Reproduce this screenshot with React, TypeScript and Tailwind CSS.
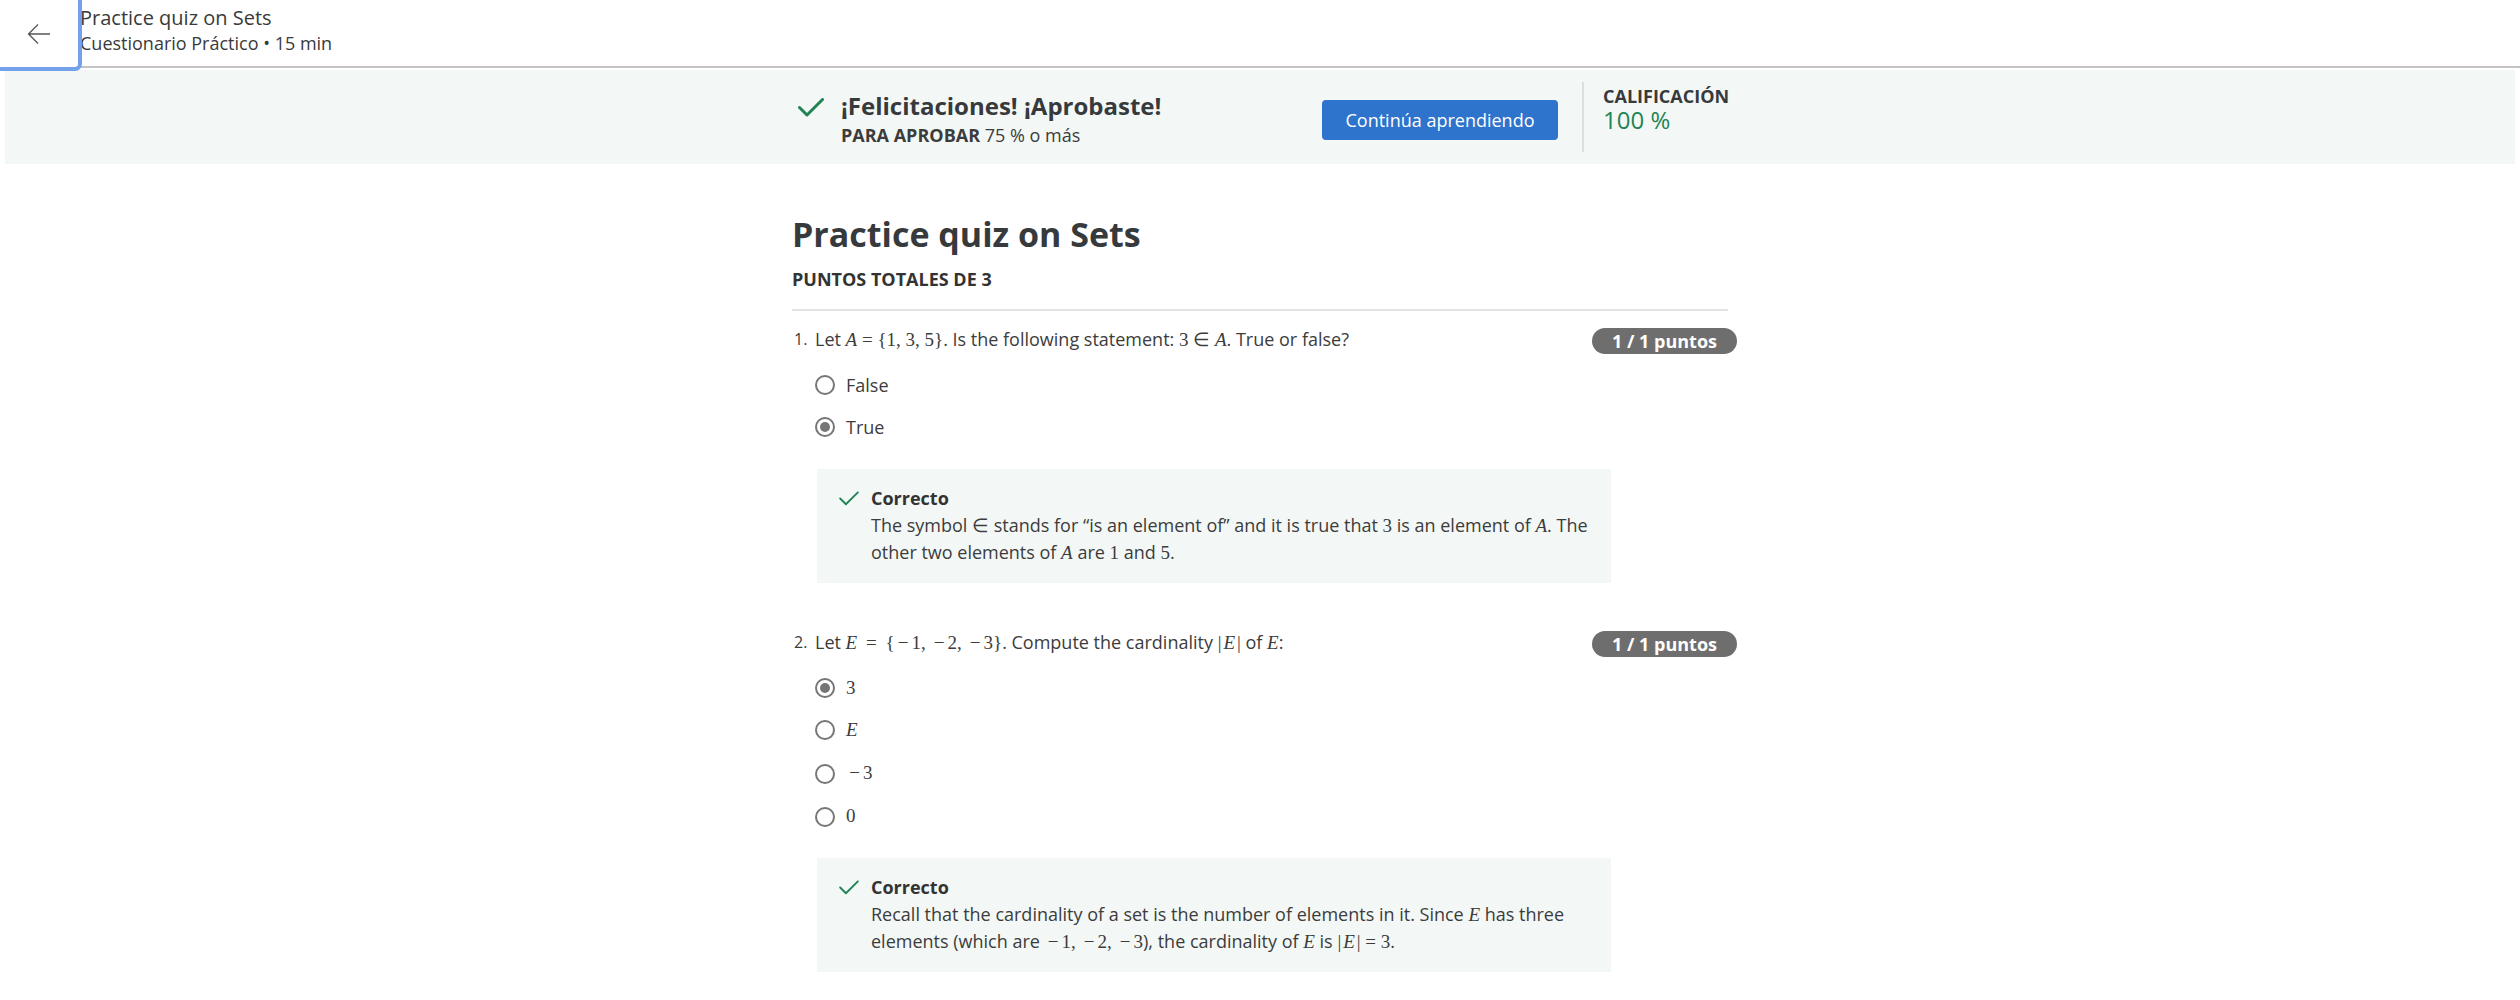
import { ReactNode } from "react";

function Tick({ className }: { className?: string }) {
  return (
    <svg viewBox="0 0 26 19" className={className} fill="none" stroke="currentColor" strokeLinecap="round" strokeLinejoin="round">
      <polyline points="1.5,9.5 9,17 24.5,1.5" />
    </svg>
  );
}

function M({ children, i }: { children: ReactNode; i?: boolean }) {
  return (
    <span className={`font-['Liberation_Serif',serif] text-[19px] ${i ? "italic" : ""}`}>{children}</span>
  );
}

// wider minus, closer to the math font's glyph
function Neg() {
  return <span className="inline-block w-[17px] text-center">−</span>;
}

function Abs({ v }: { v: string }) {
  return (
    <span>
      |<i className="px-[2px]">{v}</i>|
    </span>
  );
}

function Radio({ checked }: { checked?: boolean }) {
  return (
    <span className="w-[20px] h-[20px] shrink-0 rounded-full border-2 border-[#767676] flex items-center justify-center">
      {checked && <span className="w-[10px] h-[10px] rounded-full bg-[#767676]" />}
    </span>
  );
}

function Option({ checked, h = "h-[42px]", children }: { checked?: boolean; h?: string; children: ReactNode }) {
  return (
    <div className={`flex items-center ${h} pl-[23px]`}>
      <Radio checked={checked} />
      <span className="ml-[11px] text-[18px] text-[#3c3c3c]">{children}</span>
    </div>
  );
}

function Badge() {
  return (
    <span className="shrink-0 mt-[1px] mr-[-9px] h-[26px] px-[20px] rounded-full bg-[#6e6e6e] text-white text-[18px] font-bold leading-[26px]">
      1 / 1 puntos
    </span>
  );
}

function Feedback({ children }: { children: ReactNode }) {
  return (
    <div className="ml-[25px] w-[794px] bg-[#f3f8f6] pt-[17px] pb-[17px] pl-[22px] pr-[8px] flex">
      <Tick className="w-[20px] h-[15px] mt-[5px] shrink-0 text-[#1f8354] stroke-[2.4]" />
      <div className="ml-[12px]">
        <div className="text-[18px] font-bold leading-6 text-[#333]">Correcto</div>
        <p className="mt-[2px] text-[18px] leading-[26px] text-[#3c3c3c] whitespace-nowrap">{children}</p>
      </div>
    </div>
  );
}

export default function App() {
  return (
    <div className="min-h-screen bg-white font-['Open_Sans',sans-serif] text-[#333]">
      <header className="flex h-[68px] border-b-2 border-[#c4c4c4]">
        <button className="relative z-10 w-[78px] h-[67px] flex items-center justify-center bg-white rounded-br-[3px] outline-4 outline-[#74a2ea]">
          <svg viewBox="0 0 24 22" className="w-[24px] h-[22px] text-[#555]" fill="none" stroke="currentColor" strokeWidth={1.3}>
            <path d="M23 11H1.5M11 1.5L1.5 11l9.5 9.5" />
          </svg>
        </button>
        <div className="ml-[2px] pt-[6px] flex flex-col">
          <span className="text-[20px] leading-6 text-[#3a3a3a]">Practice quiz on Sets</span>
          <span className="mt-[1px] text-[18px] leading-[24px] text-[#3a3a3a]">Cuestionario Práctico • 15 min</span>
        </div>
      </header>

      <div className="px-[5px] pt-[2px]">
        <div className="h-[94px] bg-[#f3f8f6]">
          <div className="w-[936px] mx-auto h-full flex items-center">
            <div className="flex-1 flex pl-[6px] mt-[2px]">
              <Tick className="w-[26px] h-[19px] mt-[8px] text-[#1f8354] stroke-[3]" />
              <div className="ml-[17px]">
                <div className="text-[24px] font-bold leading-8 text-[#373a3c]">¡Felicitaciones! ¡Aprobaste!</div>
                <div className="mt-[1px] text-[18px] leading-6 text-[#3c3c3c]">
                  <span className="font-bold">PARA APROBAR</span> 75 % o más
                </div>
              </div>
            </div>
            <button className="mt-[6px] w-[236px] h-[40px] rounded-[4px] bg-[#2e73cc] text-white text-[18px]">
              Continúa aprendiendo
            </button>
            <div className="self-stretch my-[12px] ml-[24px] w-[2px] bg-[#dedede]" />
            <div className="self-start mt-[14px] ml-[19px] w-[125px]">
              <div className="text-[18px] font-bold leading-6 text-[#373a3c]">CALIFICACIÓN</div>
              <div className="text-[24px] leading-6 text-[#1f8354]">100 %</div>
            </div>
          </div>
        </div>
      </div>

      <main className="w-[936px] mx-auto pt-[48px] pb-[40px]">
        <h1 className="text-[34px] font-bold leading-[44px] text-[#373a3c]">Practice quiz on Sets</h1>
        <div className="mt-[11px] text-[18px] font-bold leading-6 text-[#333]">PUNTOS TOTALES DE 3</div>
        <div className="mt-[18px] h-[2px] bg-[#e2e2e2]" />

        <section className="mt-[16px]">
          <div className="flex items-start">
            <span className="w-[23px] pl-[2px] text-[16px] leading-6 text-[#3c3c3c]">1.</span>
            <div className="flex-1 text-[18px] leading-6 text-[#3c3c3c]">
              Let <M i>A</M> <M>= {"{"}1, 3, 5{"}"}</M>. Is the following statement: <M>3 ∈</M> <M i>A</M>. True or false?
            </div>
            <Badge />
          </div>
          <div className="mt-[10px]">
            <Option>False</Option>
            <Option checked>True</Option>
          </div>
          <div className="mt-[21px]">
            <Feedback>
              The symbol <M>∈</M> stands for “is an element of” and it is true that <M>3</M> is an element of <M i>A</M>. The
              <br />
              other two elements of <M i>A</M> are <M>1</M> and <M>5</M>.
            </Feedback>
          </div>
        </section>

        <section className="mt-[47px]">
          <div className="flex items-start">
            <span className="w-[23px] pl-[2px] text-[16px] leading-6 text-[#3c3c3c]">2.</span>
            <div className="flex-1 text-[18px] leading-6 text-[#3c3c3c]">
              Let <M i>E</M> <M><span className="mx-[4px]">=</span> {"{"}<Neg />1, <Neg />2, <Neg />3{"}"}</M>. Compute the cardinality <M><Abs v="E" /></M> of <M i>E</M>:
            </div>
            <Badge />
          </div>
          <div className="mt-[10px]">
            <Option checked><M>3</M></Option>
            <Option><M i>E</M></Option>
            <Option h="h-[45px]"><M><Neg />3</M></Option>
            <Option h="h-[41px]"><M>0</M></Option>
          </div>
          <div className="mt-[21px]">
            <Feedback>
              Recall that the cardinality of a set is the number of elements in it. Since <M i>E</M> has three
              <br />
              elements (which are <M><Neg />1, <Neg />2, <Neg />3</M>), the cardinality of <M i>E</M> is <M><Abs v="E" /> = 3</M>.
            </Feedback>
          </div>
        </section>
      </main>
    </div>
  );
}
